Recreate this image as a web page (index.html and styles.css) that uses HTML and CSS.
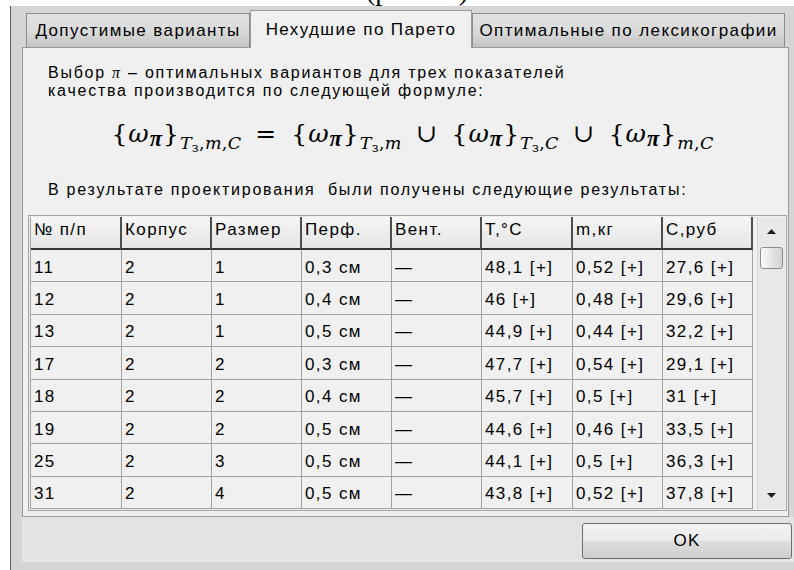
FILE: index.html
```html
<!DOCTYPE html>
<html lang="ru">
<head>
<meta charset="utf-8">
<title>Нехудшие по Парето</title>
<link rel="stylesheet" href="styles.css">
</head>
<body>
<div class="caption"><span>(рис. 12)</span></div>
<div class="window">
  <div class="tabs">
    <div class="tab tab-1">Допустимые варианты</div>
    <div class="tab tab-2">Нехудшие по Парето</div>
    <div class="tab tab-3">Оптимальные по лексикографии</div>
  </div>
  <div class="panel">
    <p class="text intro">Выбор <i class="math">π</i> – оптимальных вариантов для трех показателей<br>качества производится по следующей формуле:</p>
    <div class="formula">
      <span class="grp">{<i>ω</i><b class="pi">π</b>}<span class="sx"><i>T</i><span class="sx2">з</span>,<i>m</i>,<i>C</i></span></span>
      <span class="op">=</span>
      <span class="grp">{<i>ω</i><b class="pi">π</b>}<span class="sx"><i>T</i><span class="sx2">з</span>,<i>m</i></span></span>
      <span class="op">∪</span>
      <span class="grp">{<i>ω</i><b class="pi">π</b>}<span class="sx"><i>T</i><span class="sx2">з</span>,<i>C</i></span></span>
      <span class="op">∪</span>
      <span class="grp">{<i>ω</i><b class="pi">π</b>}<span class="sx"><i>m</i>,<i>C</i></span></span>
    </div>
    <p class="text result">В результате проектирования&nbsp; были получены следующие результаты:</p>

    <div class="grid-box">
      <div class="grid" role="table">
        <div class="th">№ п/п</div><div class="th">Корпус</div><div class="th">Размер</div><div class="th">Перф.</div><div class="th">Вент.</div><div class="th">T,°C</div><div class="th">m,кг</div><div class="th">C,руб</div>

        <div class="td">11</div><div class="td">2</div><div class="td">1</div><div class="td">0,3 см</div><div class="td">—</div><div class="td">48,1 [+]</div><div class="td">0,52 [+]</div><div class="td">27,6 [+]</div>
        <div class="td">12</div><div class="td">2</div><div class="td">1</div><div class="td">0,4 см</div><div class="td">—</div><div class="td">46 [+]</div><div class="td">0,48 [+]</div><div class="td">29,6 [+]</div>
        <div class="td">13</div><div class="td">2</div><div class="td">1</div><div class="td">0,5 см</div><div class="td">—</div><div class="td">44,9 [+]</div><div class="td">0,44 [+]</div><div class="td">32,2 [+]</div>
        <div class="td">17</div><div class="td">2</div><div class="td">2</div><div class="td">0,3 см</div><div class="td">—</div><div class="td">47,7 [+]</div><div class="td">0,54 [+]</div><div class="td">29,1 [+]</div>
        <div class="td">18</div><div class="td">2</div><div class="td">2</div><div class="td">0,4 см</div><div class="td">—</div><div class="td">45,7 [+]</div><div class="td">0,5 [+]</div><div class="td">31 [+]</div>
        <div class="td">19</div><div class="td">2</div><div class="td">2</div><div class="td">0,5 см</div><div class="td">—</div><div class="td">44,6 [+]</div><div class="td">0,46 [+]</div><div class="td">33,5 [+]</div>
        <div class="td">25</div><div class="td">2</div><div class="td">3</div><div class="td">0,5 см</div><div class="td">—</div><div class="td">44,1 [+]</div><div class="td">0,5 [+]</div><div class="td">36,3 [+]</div>
        <div class="td">31</div><div class="td">2</div><div class="td">4</div><div class="td">0,5 см</div><div class="td">—</div><div class="td">43,8 [+]</div><div class="td">0,52 [+]</div><div class="td">37,8 [+]</div>
      </div>

      <div class="scrollbar">
        <div class="sb-btn">
          <svg width="9" height="5" viewBox="0 0 9 5"><polygon points="0,5 4.5,0 9,5" fill="#1f1f1f"/></svg>
        </div>
        <div class="sb-track"><div class="sb-thumb"></div></div>
        <div class="sb-btn">
          <svg width="9" height="5" viewBox="0 0 9 5"><polygon points="0,0 9,0 4.5,5" fill="#1f1f1f"/></svg>
        </div>
      </div>
    </div>
  </div>
  <div class="buttons">
    <button class="ok" type="button">OK</button>
  </div>
</div>
</body>
</html>
```
FILE: styles.css
```css
* {
  box-sizing: border-box;
}

html,
body {
  margin: 0;
}

body {
  width: 794px;
  height: 570px;
  overflow: hidden;
  background: #ffffff;
  color: #000000;
  font-family: "Liberation Sans", Arial, sans-serif;
}

/* figure caption of the page above the dialog, only its lower edge shows */
.caption {
  height: 6px;
  overflow: hidden;
  padding-left: 366px;
  font-family: "Liberation Serif", "Times New Roman", serif;
  font-size: 28px;
  line-height: 28px;
}

.caption span {
  display: block;
  margin-top: -23px;
}

/* dialog window */
.window {
  height: 564px;
  margin-left: 10px;
  padding-left: 11px;
  border-left: 1px solid #5a5a5a;
  background: #d5d5d5;
  display: flex;
  flex-direction: column;
}

/* tab strip */
.tabs {
  height: 41px;
  flex-shrink: 0;
  padding-left: 4px;
  display: flex;
  align-items: flex-end;
}

.tab {
  height: 34px;
  padding-top: 1px;
  display: flex;
  align-items: center;
  justify-content: center;
  border: 1px solid #8c8c8c;
  border-bottom: none;
  background: linear-gradient(#e3e3e3 0%, #d9d9d9 55%, #c3c3c3 100%);
  font-size: 17px;
  letter-spacing: 1.4px;
  white-space: nowrap;
}

.tab-1 {
  width: 224px;
}

.tab-2 {
  width: 222px;
  height: 38px;
  margin-bottom: -1px;
  padding-top: 0;
  position: relative;
  z-index: 1;
  border-color: #9a9a9a;
  background: #f0f0f0;
}

.tab-3 {
  width: 313px;
}

/* tab page */
.panel {
  height: 470px;
  flex-shrink: 0;
  margin-right: 5px;
  padding: 16px 0 5px 0;
  border: 1px solid #9a9a9a;
  background: #f0f0f0;
}

.text {
  margin: 0 0 0 25px;
  font-size: 16px;
  line-height: 18px;
  letter-spacing: 1.75px;
  white-space: nowrap;
}

.math {
  font-family: "Liberation Serif", "DejaVu Serif", serif;
  font-style: italic;
}

.formula {
  height: 40px;
  margin-top: 14px;
  padding-left: 14px;
  text-align: center;
  font-family: "DejaVu Serif", "Liberation Serif", serif;
  font-size: 25px;
  line-height: 40px;
  letter-spacing: 1px;
  white-space: nowrap;
}

.formula i {
  font-style: italic;
}

.formula .op {
  margin: 0 5px;
}

.formula .pi {
  font-family: "Liberation Serif", "DejaVu Serif", serif;
  font-size: 0.9em;
  font-style: italic;
  font-weight: bold;
  line-height: 0;
  vertical-align: -4px;
}

.formula .sx {
  font-size: 0.7em;
  letter-spacing: 0.3px;
  line-height: 0;
  vertical-align: -7px;
}

.formula .sx2 {
  font-size: 0.72em;
  vertical-align: -3px;
}

.result {
  margin-top: 27px;
}

/* grid with its scrollbar */
.grid-box {
  height: 296px;
  margin: 16px 1px 0 5px;
  padding: 1px;
  border: 1px solid #a2a2a2;
  display: flex;
}

.grid {
  width: 723px;
  border-left: 1px solid #a4a4a4;
  display: grid;
  grid-template-columns: 91px 90px 90px 90px 90px 91px 90px 90px;
  grid-template-rows: 33px repeat(8, 32.375px);
  font-size: 17px;
  letter-spacing: 1.4px;
  white-space: nowrap;
}

.th {
  padding: 0 0 5px 3px;
  display: flex;
  align-items: center;
  border-right: 2px solid #4e4e4e;
  border-bottom: 2px solid #333333;
  background: linear-gradient(#f6f6f6, #e5e5e5);
}

.td {
  padding: 4px 0 0 3px;
  display: flex;
  align-items: center;
  border-right: 1px solid #a2a2a2;
  border-bottom: 1px solid #a2a2a2;
}

.scrollbar {
  width: 28px;
  margin-left: 4px;
  display: flex;
  flex-direction: column;
  border-left: 1px solid #d6d6d6;
  background: #e8e8e8;
}

.sb-btn {
  height: 28px;
  flex-shrink: 0;
  display: flex;
  align-items: center;
  justify-content: center;
}

.sb-track {
  flex: 1;
  padding: 2px 2px 0 2px;
}

.sb-thumb {
  height: 22px;
  border: 1px solid #8e8e8e;
  border-radius: 3px;
  background: linear-gradient(to right, #fafafa 0%, #e6e6e6 50%, #d2d2d2 100%);
}

/* button bar */
.buttons {
  height: 45px;
  flex-shrink: 0;
  padding: 6px 2px 0 0;
  display: flex;
  justify-content: flex-end;
  align-items: flex-start;
  background: #e3e3e3;
}

.ok {
  width: 210px;
  height: 36px;
  padding: 0;
  border: 1px solid #6e6e6e;
  border-radius: 3px;
  background: linear-gradient(#f3f3f3 0%, #ebebeb 48%, #dddddd 52%, #cfcfcf 100%);
  color: #000000;
  font-family: "Liberation Sans", Arial, sans-serif;
  font-size: 17px;
  letter-spacing: 1.2px;
}
```
